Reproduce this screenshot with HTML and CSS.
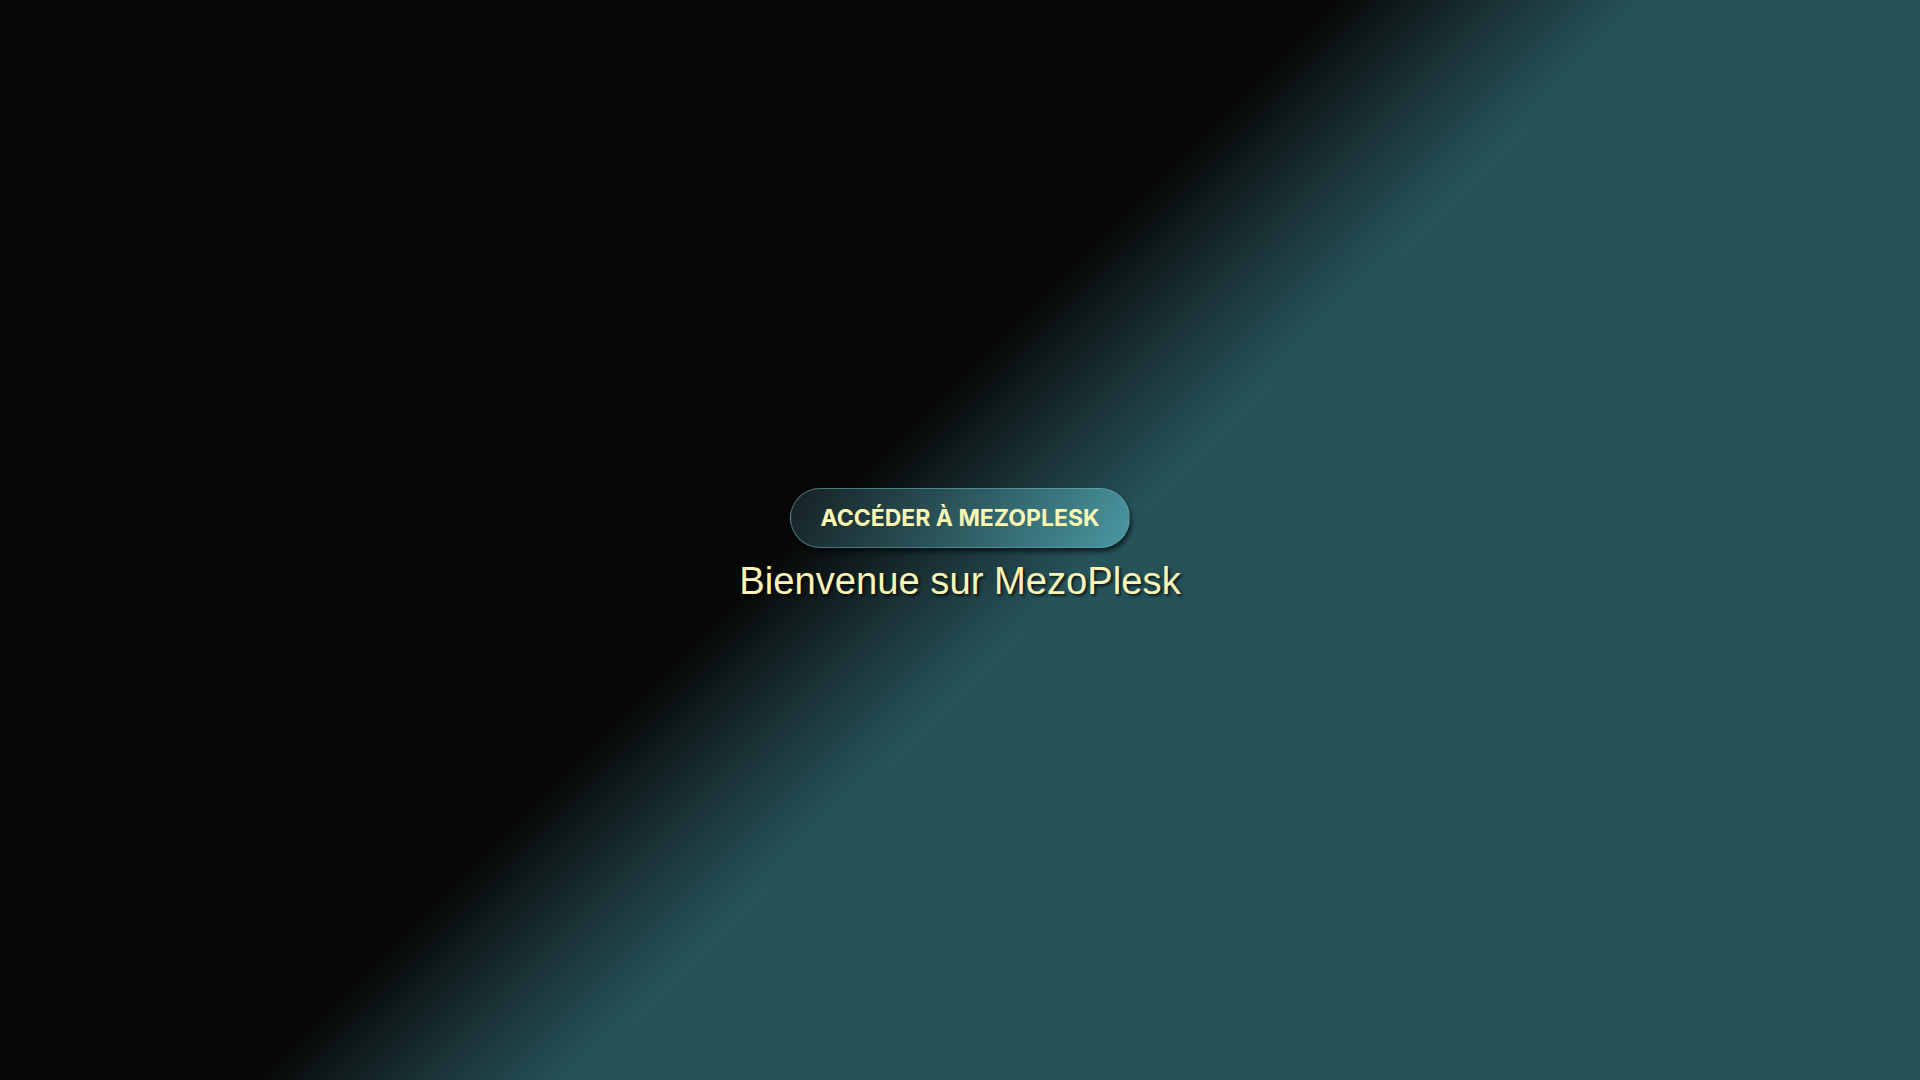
FILE: index.html
```html
<!DOCTYPE html>
<html lang="fr">
<head>
<meta charset="utf-8">
<title>MezoPlesk</title>
<link rel="stylesheet" href="styles.css">
</head>
<body>
<main class="hero">
  <button class="cta" type="button">ACCÉDER À MEZOPLESK</button>
  <h1 class="title">Bienvenue sur MezoPlesk</h1>
</main>
</body>
</html>
```

FILE: styles.css
```css
html, body {
  margin: 0;
  padding: 0;
  height: 100%;
}
body {
  background: linear-gradient(135deg, #070707 0%, #070707 44.5%, #1a3236 50%, #26535a 55%, #245058 61%, #245058 100%);
  font-family: "Liberation Sans", Arial, sans-serif;
  overflow: hidden;
}
.hero {
  height: 100vh;
  display: flex;
  flex-direction: column;
  align-items: center;
  justify-content: center;
  gap: 11px;
  padding-top: 11px;
  box-sizing: border-box;
}
.cta {
  font-family: Inter, "Noto Sans", sans-serif;
  font-weight: 700;
  font-size: 23px;
  line-height: 28px;
  color: #fdf7b4;
  padding: 15px 29px;
  border: 1px solid rgba(110, 175, 185, 0.55);
  border-radius: 999px;
  background: linear-gradient(120deg, #152023 0%, #2a5359 45%, #4a98a2 100%);
  box-shadow: 2px 4px 4px rgba(0, 0, 0, 0.55);
  cursor: pointer;
}
.title {
  margin: 0;
  font-family: "Liberation Sans", Arial, sans-serif;
  font-weight: 400;
  font-size: 38.2px;
  line-height: 44px;
  color: #fbf4b6;
  text-shadow: 2px 2px 3px rgba(0, 0, 0, 0.7);
}
```
